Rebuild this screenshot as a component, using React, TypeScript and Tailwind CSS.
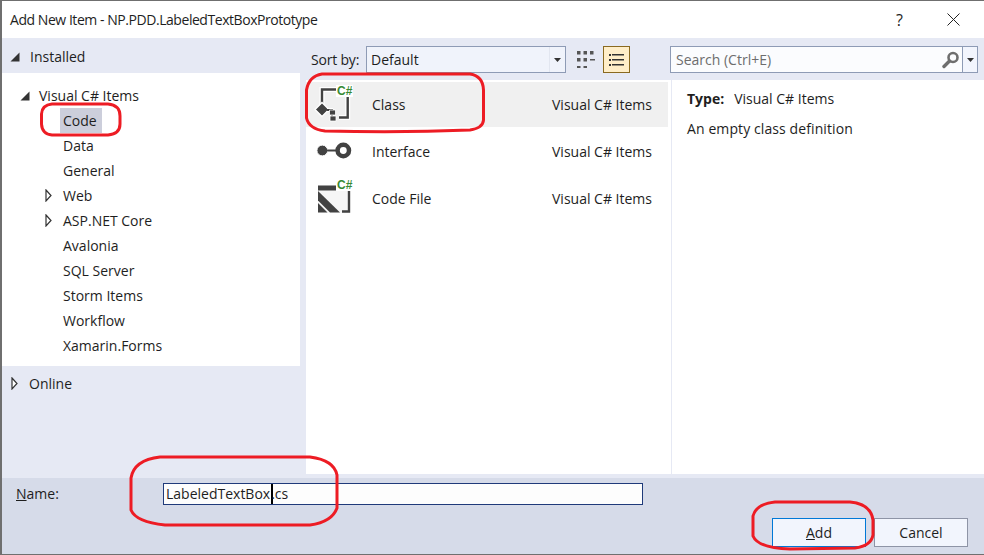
import React from "react";

const font = { fontFamily: '"Open Sans", "Noto Sans", sans-serif' };

function Expanded() {
  return (
    <svg width="10" height="10" viewBox="0 0 10 10" className="shrink-0">
      <path d="M9.500 0.500V9.500H0.500Z" fill="#333" />
    </svg>
  );
}
function Collapsed() {
  return (
    <svg width="7" height="13" viewBox="0 0 7 13" className="shrink-0">
      <path d="M1 1L6 6.500L1 12Z" fill="#fff" stroke="#333" strokeWidth="1.200" />
    </svg>
  );
}

function TreeRow({ label, collapsed, selected }: { label: string; collapsed?: boolean; selected?: boolean }) {
  return (
    <div className="h-[25px] flex items-center relative pl-[58px]">
      {collapsed && (
        <span className="absolute left-[43px] top-[6px] flex">
          <Collapsed />
        </span>
      )}
      <span className={`h-[25px] leading-[25px] pl-[3px] pr-[5px] ${selected ? "bg-[#cccedb]" : ""}`}>{label}</span>
    </div>
  );
}

function ClassIcon() {
  return (
    <svg width="38" height="40" viewBox="0 0 38 40" className="overflow-visible">
      <path d="M6 21V4.500H20" fill="none" stroke="#fff" strokeWidth="5" />
      <path d="M31.700 12V32.500H23" fill="none" stroke="#fff" strokeWidth="5" />
      <path d="M6 21V4.500H20" fill="none" stroke="#424242" strokeWidth="2.400" />
      <path d="M31.700 12V32.500H23" fill="none" stroke="#424242" strokeWidth="2.400" />
      <path d="M-1 24.500L6 17.500L13 24.500L6 31.500Z" fill="#424242" stroke="#fff" strokeWidth="1.400" />
      <path d="M11 25H17M16 25V33" fill="none" stroke="#fff" strokeWidth="4" />
      <path d="M11 25H17M16 25V33" fill="none" stroke="#424242" strokeWidth="1.800" />
      <path d="M13.500 25H19.500V30H13.500ZM14 31H20V36H14Z" fill="#424242" stroke="#fff" strokeWidth="0.800" />
    </svg>
  );
}

function InterfaceIcon() {
  return (
    <svg width="38" height="24" viewBox="0 0 38 24">
      <circle cx="6.300" cy="10.500" r="5.400" fill="#424242" stroke="#fff" strokeWidth="1" />
      <path d="M11 10.500H22" stroke="#424242" strokeWidth="2" />
      <circle cx="27.300" cy="10.500" r="5.700" fill="#fff" stroke="#424242" strokeWidth="4.500" />
    </svg>
  );
}

function CodeFileIcon() {
  return (
    <svg width="38" height="34" viewBox="0 0 38 34">
      <path d="M2 3.500H24L34 8.500V30.500H2Z" fill="#f6f6f6" />
      <path d="M2 3.500H21L26 8.500H2Z" fill="#424242" />
      <path d="M2 9L24 30.500H14L2 18.500Z" fill="#424242" />
      <path d="M2 21L11.500 30.500H2Z" fill="#424242" />
      <path d="M33 8.500V29.500H26" fill="none" stroke="#424242" strokeWidth="2.400" />
    </svg>
  );
}

function CSharp() {
  return (
    <span
      className="text-[12px] leading-[12px] font-bold text-[#388a34] bg-white px-[1px] block"
      style={{ fontFamily: '"Liberation Sans", sans-serif' }}
    >
      C#
    </span>
  );
}

function ListRow({ label, icon, className }: { label: string; icon: React.ReactNode; className: string }) {
  return (
    <div className={`flex items-center relative mr-[3px] ${className}`}>
      <div className="w-[66px] pl-[10px] flex items-center shrink-0 relative">{icon}</div>
      <span className="w-[180px] shrink-0">{label}</span>
      <span>Visual C# Items</span>
    </div>
  );
}

export default function App() {
  return (
    <div
      className="w-[984px] h-[555px] relative overflow-hidden flex flex-col bg-[#e6e9f4] border-l-2 border-t-[1px] border-b-[1px] border-[#6f6f6f] text-[14px] text-[#1e1e1e]"
      style={font}
    >
      {/* Title bar */}
      <div className="h-[37px] shrink-0 bg-white flex items-center pl-[8px] pr-[24px]">
        <span className="flex-1 tracking-[-0.45px]">Add New Item - NP.PDD.LabeledTextBoxPrototype</span>
        <span className="text-[16px] mr-[44px]">?</span>
        <svg width="13" height="13" viewBox="0 0 13 13">
          <path d="M0.500 0.500L12.500 12.500M12.500 0.500L0.500 12.500" stroke="#222" strokeWidth="1" />
        </svg>
      </div>

      {/* Main */}
      <div className="flex-1 min-h-0 flex">
        {/* Left */}
        <div className="w-[298px] shrink-0 flex flex-col">
          <div className="h-[35px] shrink-0 flex items-center pl-[8px] gap-[10px] pt-[2px]">
            <Expanded />
            <span className="leading-none">Installed</span>
          </div>
          <div className="h-[293px] shrink-0 bg-white pt-[10px]">
            <div className="h-[25px] flex items-center pl-[18px] gap-[9px]">
              <Expanded />
              <span>Visual C# Items</span>
            </div>
            <TreeRow label="Code" selected />
            <TreeRow label="Data" />
            <TreeRow label="General" />
            <TreeRow label="Web" collapsed />
            <TreeRow label="ASP.NET Core" collapsed />
            <TreeRow label="Avalonia" />
            <TreeRow label="SQL Server" />
            <TreeRow label="Storm Items" />
            <TreeRow label="Workflow" />
            <TreeRow label="Xamarin.Forms" />
          </div>
          <div className="h-[34px] shrink-0 flex items-center pl-[9px] gap-[11px]">
            <Collapsed />
            <span>Online</span>
          </div>
        </div>

        {/* Right */}
        <div className="flex-1 min-w-0 flex flex-col pl-[6px]">
          {/* Toolbar */}
          <div className="h-[42px] shrink-0 flex items-start pt-[8px]">
            <span className="w-[60px] pl-[5px] leading-[27px] tracking-[-0.2px]">Sort by:</span>
            <div className="w-[200px] h-[27px] border border-[#8e9bb5] bg-[#f0f3fb] flex items-center">
              <span className="flex-1 pl-[4px]">Default</span>
              <div className="w-[16px] h-full border-l border-[#e2e6f0] flex items-center justify-center">
                <svg width="7" height="4" viewBox="0 0 7 4">
                  <path d="M0 0H7L3.500 4Z" fill="#333" />
                </svg>
              </div>
            </div>
            <div className="w-[37px] h-[27px] flex items-center pl-[11px]">
              <svg width="18" height="18" viewBox="0 0 18 18" fill="#555">
                <path d="M0 0h3.500v3.500H0zM6.500 0h3.500v3.500H6.500zM13 0h3.500v3.500H13zM0 7h3.500v3.500H0zM6.500 7h3.500v3.500H6.500zM13 8h5v1.500h-5zM0 15h3.500v2H0zM6.500 15h3.500v2H6.500z" />
              </svg>
            </div>
            <div className="w-[27px] h-[27px] border border-[#8a6a20] bg-[#ffeec8] flex items-center justify-center">
              <svg width="15" height="14" viewBox="0 0 15 14" fill="#333">
                <path d="M0 1h2v2H0zM3 1h12v1.500H3zM0 6h2v2H0zM3 6h12v1.500H3zM0 11h2v2H0zM3 11h12v1.500H3z" />
              </svg>
            </div>
            <div className="ml-[40px] w-[308px] h-[27px] border border-[#8e9bb5] bg-[#fbfcfe] flex items-center">
              <span className="flex-1 pl-[5px] text-[#6d6d6d]">Search (Ctrl+E)</span>
              <svg width="18" height="18" viewBox="0 0 18 18" className="mr-[2px]">
                <circle cx="11" cy="6.500" r="4.500" fill="none" stroke="#6e6e6e" strokeWidth="2.600" />
                <path d="M7.500 10L2 15.500" stroke="#6e6e6e" strokeWidth="3.400" strokeLinecap="round" />
              </svg>
              <div className="w-[15px] h-full border-l border-[#8e9bb5] bg-[#f2f5fd] flex items-center justify-center">
                <svg width="7" height="4" viewBox="0 0 7 4">
                  <path d="M0 0H7L3.500 4Z" fill="#333" />
                </svg>
              </div>
            </div>
          </div>

          {/* Panels */}
          <div className="flex-1 min-h-0 flex mb-[4px] bg-white">
            <div className="w-[366px] shrink-0 pt-[2px] border-r border-[#e6e9f4]">
              <ListRow
                label="Class"
                className="h-[45px] mb-[1px] bg-[#f0f0f0]"
                icon={
                  <>
                    <ClassIcon />
                    <span className="absolute left-[30px] top-[0px]"><CSharp /></span>
                  </>
                }
              />
              <ListRow label="Interface" className="h-[47px]" icon={<InterfaceIcon />} />
              <ListRow
                label="Code File"
                className="h-[47px]"
                icon={
                  <>
                    <CodeFileIcon />
                    <span className="absolute left-[30px] top-[-3px]"><CSharp /></span>
                  </>
                }
              />
            </div>
            <div className="flex-1 pl-[15px] pt-[9px]">
              <div className="h-[20px] leading-[20px]">
                <b className="font-bold">Type:</b>
                <span className="ml-[10px]">Visual C# Items</span>
              </div>
              <div className="mt-[10px] leading-[20px] tracking-[0.1px]">An empty class definition</div>
            </div>
          </div>
        </div>
      </div>

      {/* Footer */}
      <div className="h-[76px] shrink-0 bg-[#d6dbe9] flex flex-col">
        <div className="h-[40px] shrink-0 flex items-start pt-[5px] pl-[14px]">
          <span className="w-[147px] leading-[22px]"><u>N</u>ame:</span>
          <div className="w-[480px] h-[22px] border border-[#1f3a7a] bg-[#fdfdfd] pl-[2px] leading-[20px] flex items-center">
            <span>LabeledTextBox</span>
            <span className="w-[2px] h-[20px] bg-black ml-[1px] mr-[-1px] order-1"></span>
            <span className="ml-[-3px] order-2 pl-[2px]">.cs</span>
          </div>
        </div>
        <div className="flex justify-end gap-[8px] pr-[16px]">
          <button className="w-[94px] h-[29px] border border-[#0078d7] bg-[#f2f5fd]"><u>A</u>dd</button>
          <button className="w-[94px] h-[29px] border border-[#8e94a6] bg-[#f2f5fd]">Cancel</button>
        </div>
      </div>

      {/* Red annotations */}
      <svg
        width="984"
        height="555"
        viewBox="0 0 984 555"
        className="absolute left-[-2px] top-[-1px] pointer-events-none"
        fill="none"
        stroke="#ed1c24"
        strokeWidth="3"
      >
        <path d="M52 104H108Q120 105 120 116V124Q120 134 108 135H52Q42 134 41.500 124V114Q42 105 52 104Z" />
        <path d="M322 74H470Q483 76 483.500 90V120Q483 128 470 130Q400 133 325 131Q309 129 306.500 118V90Q309 76 322 74Z" />
        <path d="M160 457H310Q334 460 337 475V508Q332 522 310 525H165Q136 522 131 510V478Q134 460 160 457Z" />
        <path d="M775 502H850Q871 504 873 520V535Q871 546 855 548L790 549Q758 548 753 536V516Q756 504 775 502Z" />
      </svg>
    </div>
  );
}
